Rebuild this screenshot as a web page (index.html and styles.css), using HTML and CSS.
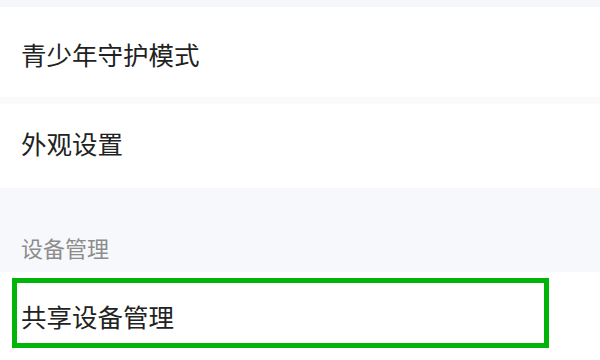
FILE: index.html
```html
<!DOCTYPE html>
<html lang="zh-CN">
<head>
<meta charset="utf-8">
<link rel="stylesheet" href="styles.css">
</head>
<body>
<div class="page">
  <div class="top-band"></div>
  <div class="row row-first"><span class="label">青少年守护模式</span></div>
  <div class="divider"></div>
  <div class="row row-second"><span class="label">外观设置</span></div>
  <div class="section-head"><span class="section-title">设备管理</span></div>
  <div class="row row-last">
    <span class="label">共享设备管理</span>
    <div class="highlight"></div>
  </div>
</div>
</body>
</html>
```

FILE: styles.css
```css
html, body {
  margin: 0;
  padding: 0;
  background: #ffffff;
}
.page {
  width: 600px;
  height: 360px;
  overflow: hidden;
  display: flex;
  flex-direction: column;
  font-family: "Noto Sans CJK SC", "Noto Sans", sans-serif;
}
.top-band {
  height: 7px;
  background: #f6f7fb;
}
.row {
  display: flex;
  align-items: center;
  padding-left: 21px;
  background: #ffffff;
}
.row-first {
  height: 90px;
  padding-top: 4px;
  box-sizing: border-box;
}
.divider {
  height: 7px;
  background: #fafafb;
}
.row-second {
  height: 84px;
  padding-bottom: 6px;
  box-sizing: border-box;
}
.label {
  font-size: 25.5px;
  color: #222222;
  line-height: 1;
}
.section-head {
  height: 84px;
  background: #f7f8fb;
  display: flex;
  align-items: flex-end;
  padding-left: 21px;
  padding-bottom: 14px;
  box-sizing: border-box;
}
.section-title {
  font-size: 22px;
  color: #8c8c8c;
  line-height: 1;
}
.row-last {
  position: relative;
  height: 88px;
  align-items: flex-start;
  padding-top: 31px;
  box-sizing: border-box;
}
.highlight {
  position: absolute;
  left: 12px;
  top: 6px;
  width: 537px;
  height: 70px;
  box-sizing: border-box;
  border: 5px solid #00b40a;
}
```
